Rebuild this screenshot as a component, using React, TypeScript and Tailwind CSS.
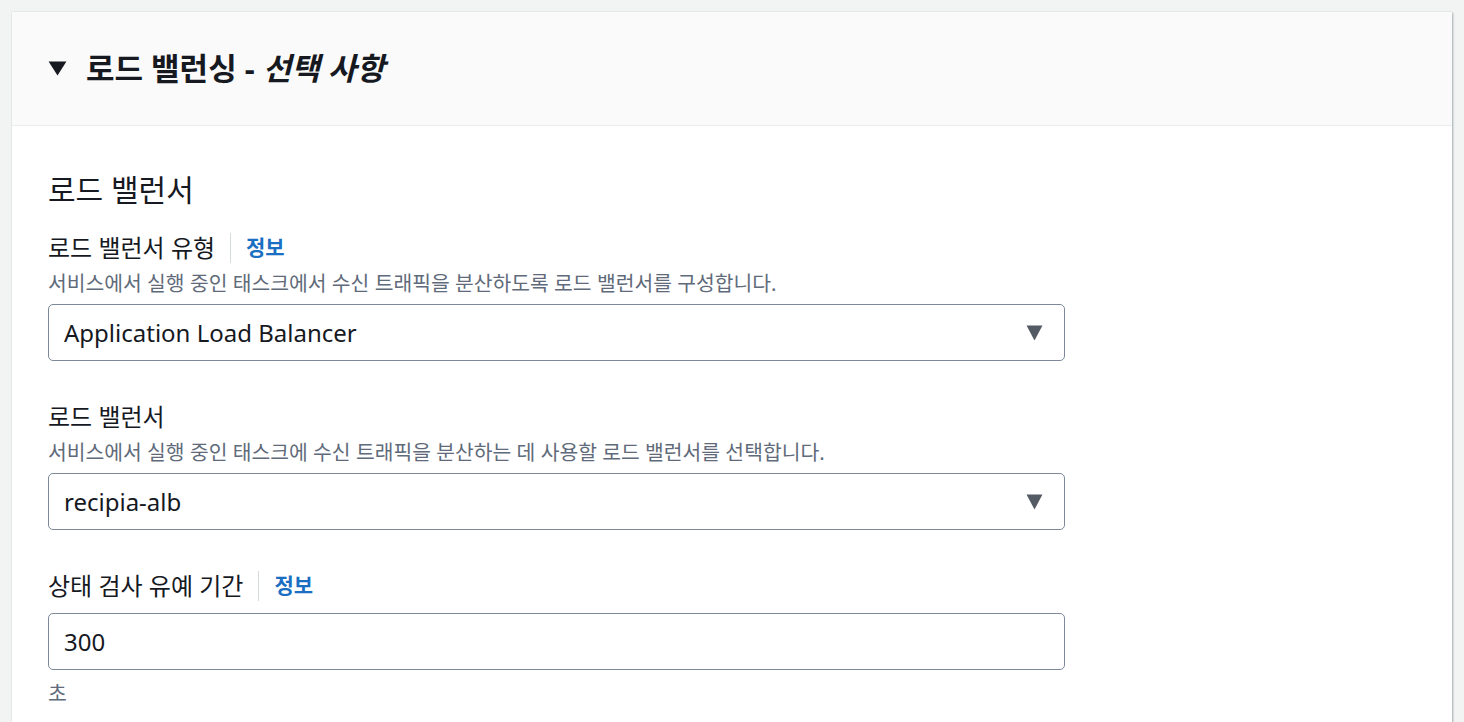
import React from 'react';

const font = { fontFamily: '"Noto Sans", "Noto Sans CJK KR", sans-serif' };

const Caret: React.FC<{ className?: string }> = ({ className }) => (
  <svg viewBox="0 0 16 14" className={className} fill="currentColor" preserveAspectRatio="none">
    <path d="M0.5 0.5h15l-7.5 13z" />
  </svg>
);

const InfoLabel: React.FC<{ label: string }> = ({ label }) => (
  <div className="flex h-[32px] items-center">
    <span className="text-[24px] leading-[32px] text-[#16191f]">{label}</span>
    <span className="mx-[15px] h-[30px] w-px bg-[#d5dbdb]" />
    <a className="text-[21px] font-bold text-[#1b6fc2]">정보</a>
  </div>
);

const SelectBox: React.FC<{ value: string }> = ({ value }) => (
  <div className="flex h-[57px] w-[1017px] items-center justify-between rounded-[5px] border border-[#7d8998] bg-white pl-[15px] pr-[21px]">
    <span className="text-[24px] text-[#16191f]">{value}</span>
    <Caret className="h-[16px] w-[17px] text-[#545b64]" />
  </div>
);

export default function App() {
  return (
    <div className="min-h-screen bg-[#f2f3f3] pl-[12px] pr-[12px] pt-[12px]" style={font}>
      <div className="h-[710px] overflow-hidden bg-white shadow-[1px_1px_2px_rgba(0,28,36,0.3),0_0_1px_rgba(0,28,36,0.2)]">
        <div className="flex h-[114px] items-center gap-[19px] border-b border-[#eaeded] bg-[#fafafa] pl-[36px]">
          <Caret className="h-[15px] w-[19px] text-[#16191f]" />
          <h2 className="text-[31px] font-bold text-[#16191f]">
            로드 밸런싱 - <i>선택 사항</i>
          </h2>
        </div>
        <div className="px-[36px] pt-[46px]">
          <h3 className="text-[30px] leading-[36px] text-[#16191f]">로드 밸런서</h3>

          <div className="mt-[24px]">
            <InfoLabel label="로드 밸런서 유형" />
            <p className="mt-[5px] text-[20.4px] leading-[28px] text-[#5f6b7a]">
              서비스에서 실행 중인 태스크에서 수신 트래픽을 분산하도록 로드 밸런서를 구성합니다.
            </p>
            <div className="mt-[7px]">
              <SelectBox value="Application Load Balancer" />
            </div>
          </div>

          <div className="mt-[40px]">
            <div className="text-[24px] leading-[32px] text-[#16191f]">로드 밸런서</div>
            <p className="mt-[5px] text-[20.4px] leading-[28px] text-[#5f6b7a]">
              서비스에서 실행 중인 태스크에 수신 트래픽을 분산하는 데 사용할 로드 밸런서를 선택합니다.
            </p>
            <div className="mt-[7px]">
              <SelectBox value="recipia-alb" />
            </div>
          </div>

          <div className="mt-[40px]">
            <InfoLabel label="상태 검사 유예 기간" />
            <div className="mt-[11px] flex h-[57px] w-[1017px] items-center rounded-[5px] border border-[#7d8998] bg-white pl-[15px]">
              <span className="text-[24px] text-[#16191f]">300</span>
            </div>
            <p className="mt-[9px] text-[20.4px] leading-[28px] text-[#5f6b7a]">초</p>
          </div>
        </div>
      </div>
    </div>
  );
}
